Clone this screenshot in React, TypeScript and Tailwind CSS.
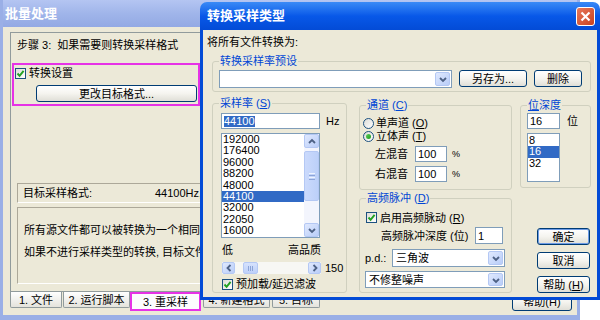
import React from "react";

function Check({ checked }: { checked?: boolean }) {
  return (
    <span className="w-[11px] h-[11px] shrink-0 border border-[#1c5180] bg-gradient-to-br from-[#dcdcd7] to-white flex items-center justify-center">
      {checked && (
        <svg width="9" height="9" viewBox="0 0 9 9">
          <path d="M1.5 4.5 L3.6 6.8 L7.6 1.8" stroke="#21a121" strokeWidth="1.9" fill="none" />
        </svg>
      )}
    </span>
  );
}

function Radio({ checked }: { checked?: boolean }) {
  return (
    <span className="w-[11px] h-[11px] shrink-0 rounded-full border border-[#1c5180] bg-gradient-to-br from-[#dcdcd7] to-white flex items-center justify-center">
      {checked && <span className="w-[5px] h-[5px] rounded-full bg-gradient-to-br from-[#5ad05a] to-[#1a9a1a]" />}
    </span>
  );
}

const arrowPaths: Record<string, string> = {
  up: "M2 7 L5 4 L8 7",
  down: "M2 4 L5 7 L8 4",
  left: "M6.5 2 L3.5 5 L6.5 8",
  right: "M3.5 2 L6.5 5 L3.5 8",
};

function SBtn({ dir, className }: { dir: string; className: string }) {
  return (
    <div className={"shrink-0 flex items-center justify-center rounded-[2px] border border-[#b4c8f4] bg-gradient-to-br from-[#e0e9fe] to-[#b9cdf8] " + className}>
      <svg width="10" height="10" viewBox="0 0 10 10">
        <path d={arrowPaths[dir]} stroke="#4d6185" strokeWidth="1.8" fill="none" />
      </svg>
    </div>
  );
}

function Btn({ children, className, def }: { children: React.ReactNode; className: string; def?: boolean }) {
  return (
    <div
      className={
        "shrink-0 flex items-center justify-center border border-[#003c74] rounded-[3px] bg-gradient-to-b from-white via-[#f5f4ef] to-[#e0dfd7] " +
        (def ? "shadow-[inset_0_0_0_1px_#6d9be6] " : "") +
        className
      }
    >
      {children}
    </div>
  );
}

function Group({ title, className, children }: { title: React.ReactNode; className: string; children?: React.ReactNode }) {
  return (
    <div className={"relative shrink-0 border border-[#d0d0bf] rounded-[3px] " + className}>
      <span className="absolute -top-[7px] left-[6px] bg-[#ece9d8] px-[1px] text-[#0046d5] leading-[12px] whitespace-nowrap">
        {title}
      </span>
      {children}
    </div>
  );
}

function Select({ text, className }: { text?: string; className: string }) {
  return (
    <div className={"shrink-0 flex border border-[#7f9db9] bg-white " + className}>
      <div className="flex-1 flex items-center pl-[3px] whitespace-nowrap">{text}</div>
      <SBtn dir="down" className="w-[15px] m-[1px]" />
    </div>
  );
}

const rates = ["192000", "176400", "96000", "88200", "48000", "44100", "32000", "22050", "16000"];

export default function App() {
  return (
    <div className="relative w-[600px] h-[320px] overflow-hidden bg-white text-[11px] leading-[12px] text-black font-['Liberation_Sans','Noto_Sans_CJK_SC',sans-serif]">
      {/* Background window */}
      <div className="absolute left-0 top-0 w-[580px] h-[320px] flex flex-col bg-[#ece9d8] border-l-[3px] border-r-[3px] border-b-[5px] border-[#9aafe6]">
        <div className="h-[27px] shrink-0 flex items-center pl-[2px] bg-gradient-to-b from-[#b4c5f2] via-[#a0b5ea] to-[#93a9e4] text-white font-bold text-[13px]">
          批量处理
        </div>
        <div className="flex-1 flex flex-col pl-[7px] pt-[5px]">
          <div className="w-[562px] h-[260px] shrink-0 flex flex-col border border-[#919b9c]">
            <div className="mt-[6px] ml-[6px] whitespace-pre">步骤 3:  如果需要则转换采样格式</div>
            <div className="mt-[12px] ml-[1px] w-[188px] h-[43px] border-2 border-[#e632e6] flex flex-col">
              <div className="mt-[2px] ml-[1px] flex items-center gap-[3px] h-[12px]">
                <Check checked />
                <span>转换设置</span>
              </div>
              <Btn className="mt-[6px] ml-[22px] w-[161px] h-[17px]">更改目标格式...</Btn>
            </div>
            <div className="mt-[77px] ml-[6px] w-[540px] h-[20px] flex items-center border-t border-l border-[#aca899] border-b-white border-r-white border-b border-r pl-[5px] whitespace-nowrap">
              <span className="w-[132px]">目标采样格式:</span>
              <span>44100Hz, 16 位, 立体声</span>
            </div>
            <div className="mt-[4px] ml-[6px] w-[540px] h-[77px] flex flex-col border-t border-l border-[#aca899] border-b-white border-r-white border-b border-r pl-[6px] pt-[16px] gap-[10px] whitespace-nowrap">
              <span>所有源文件都可以被转换为一个相同的采样类型。</span>
              <span>如果不进行采样类型的转换, 目标文件将保持原来的采样类型。</span>
            </div>
          </div>
          <div className="flex items-start h-[19px]">
            <div className="w-[52px] h-[16px] flex items-center justify-center border border-t-0 border-[#919b9c] rounded-b-[2px] bg-gradient-to-t from-[#e4e3dc] to-white whitespace-pre">1. 文件</div>
            <div className="ml-[1px] w-[67px] h-[16px] flex items-center justify-center border border-t-0 border-[#919b9c] rounded-b-[2px] bg-gradient-to-t from-[#e4e3dc] to-white whitespace-pre">2. 运行脚本</div>
            <div className="w-[71px] h-[19px] flex items-center justify-center border-2 border-[#e632e6] bg-[#fcfcfe] whitespace-pre">3. 重采样</div>
            <div className="ml-[2px] w-[67px] h-[16px] flex items-center justify-center border border-t-0 border-[#919b9c] rounded-b-[2px] bg-gradient-to-t from-[#e4e3dc] to-white whitespace-pre">4. 新建格式</div>
            <div className="ml-[2px] w-[48px] h-[16px] flex items-center justify-center border border-t-0 border-[#919b9c] rounded-b-[2px] bg-gradient-to-t from-[#e4e3dc] to-white whitespace-pre">5. 目标</div>
            <Btn className="ml-[192px] mt-[1px] w-[60px] h-[18px]">帮助(H)</Btn>
          </div>
        </div>
      </div>

      {/* Foreground dialog */}
      <div className="absolute left-[200px] top-[2px] w-[400px] h-[298px] flex flex-col">
        <div className="h-[28px] shrink-0 flex items-center justify-between pl-[7px] pr-[5px] rounded-t-[7px] bg-gradient-to-b from-[#3a8af6] via-[#0858e8] to-[#034bd6] text-white font-bold text-[13px]">
          <span>转换采样类型</span>
          <div className="w-[19px] h-[19px] rounded-[3px] border border-white bg-gradient-to-br from-[#e8785a] to-[#c9401c] flex items-center justify-center">
            <svg width="11" height="11" viewBox="0 0 11 11">
              <path d="M1.5 1.5 L9.5 9.5 M9.5 1.5 L1.5 9.5" stroke="white" strokeWidth="2.2" />
            </svg>
          </div>
        </div>
        <div className="flex-1 flex flex-col bg-[#ece9d8] border-x-[3px] border-b-[3px] border-[#034bd6] pl-[4px] pr-[6px]">
          <div className="mt-[6px] h-[12px]">将所有文件转换为:</div>
          {/* preset group */}
          <Group title="转换采样率预设" className="ml-[5px] mt-[13px] h-[31px]">
            <div className="flex items-center h-full pl-[6px] pt-[4px]">
              <Select className="w-[233px] h-[18px]" />
              <Btn className="ml-[7px] w-[68px] h-[17px]">另存为...</Btn>
              <Btn className="ml-[7px] w-[48px] h-[17px]">删除</Btn>
            </div>
          </Group>

          <div className="flex mt-[11px]">
            {/* sample rate */}
            <Group title={<>采样率 (<u>S</u>)</>} className="ml-[5px] w-[135px] h-[190px] flex flex-col">
              <div className="mt-[9px] ml-[8px] flex items-center">
                <div className="w-[99px] h-[16px] border border-[#7f9db9] bg-white flex items-center pl-[2px]">
                  <span className="bg-[#316ac5] text-white leading-[11px]">44100</span>
                </div>
                <span className="ml-[6px]">Hz</span>
              </div>
              <div className="mt-[4px] ml-[8px] w-[99px] h-[105px] border border-[#7f9db9] bg-white flex overflow-hidden">
                <div className="flex-1 flex flex-col overflow-hidden">
                  {rates.map((r) => (
                    <div
                      key={r}
                      className={
                        "h-[11.4px] leading-[11.4px] shrink-0 pl-[1px] " + (r === "44100" ? "bg-[#316ac5] text-white" : "")
                      }
                    >
                      {r}
                    </div>
                  ))}
                </div>
                <div className="w-[15px] flex flex-col bg-[#f3f5fd]">
                  <SBtn dir="up" className="h-[14px]" />
                  <div className="mt-[3px] h-[50px] rounded-[2px] border border-[#b4c8f4] bg-gradient-to-r from-[#cbdafc] to-[#bcd0f9] flex flex-col items-center justify-center gap-[1px]">
                    <span className="w-[6px] h-[1px] bg-[#eef3fe]" />
                    <span className="w-[6px] h-[1px] bg-[#8ca4d8]" />
                    <span className="w-[6px] h-[1px] bg-[#eef3fe]" />
                    <span className="w-[6px] h-[1px] bg-[#8ca4d8]" />
                  </div>
                  <div className="flex-1" />
                  <SBtn dir="down" className="h-[14px]" />
                </div>
              </div>
              <div className="mt-[7px] ml-[9px] w-[99px] flex justify-between h-[11px] leading-[11px]">
                <span>低</span>
                <span>高品质</span>
              </div>
              <div className="mt-[6px] ml-[9px] flex items-center h-[12px]">
                <div className="w-[99px] h-[12px] flex bg-[#f7f7f4]">
                  <SBtn dir="left" className="w-[13px] h-[12px]" />
                  <div className="ml-[8px] w-[15px] h-[12px] rounded-[2px] border border-[#b4c8f4] bg-gradient-to-b from-[#d6e2fd] to-[#bdd0f9] flex items-center justify-center gap-[1px]">
                    <span className="w-[1px] h-[5px] bg-[#8ca4d8]" />
                    <span className="w-[1px] h-[5px] bg-[#8ca4d8]" />
                    <span className="w-[1px] h-[5px] bg-[#8ca4d8]" />
                  </div>
                  <div className="flex-1" />
                  <SBtn dir="right" className="w-[13px] h-[12px]" />
                </div>
                <span className="ml-[4px]">150</span>
              </div>
              <div className="mt-[4px] ml-[9px] flex items-center gap-[3px] h-[12px]">
                <Check checked />
                <span>预加载/延迟滤波</span>
              </div>
            </Group>

            {/* middle column */}
            <div className="ml-[12px] w-[153px] flex flex-col">
              <Group title={<>通道 (<u>C</u>)</>} className="mt-[2px] h-[85px] flex flex-col">
                <div className="mt-[11px] ml-[3px] flex items-center gap-[2px] h-[12px]">
                  <Radio />
                  <span>单声道 (<u>O</u>)</span>
                </div>
                <div className="mt-[1px] ml-[3px] flex items-center gap-[2px] h-[12px]">
                  <Radio checked />
                  <span>立体声 (<u>T</u>)</span>
                </div>
                <div className="mt-[4px] ml-[15px] flex items-center h-[16px]">
                  <span className="w-[40px]">左混音</span>
                  <div className="w-[32px] h-[16px] border border-[#7f9db9] bg-white flex items-center pl-[2px]">100</div>
                  <span className="ml-[5px] text-[9px]">%</span>
                </div>
                <div className="mt-[4px] ml-[15px] flex items-center h-[16px]">
                  <span className="w-[40px]">右混音</span>
                  <div className="w-[32px] h-[16px] border border-[#7f9db9] bg-white flex items-center pl-[2px]">100</div>
                  <span className="ml-[5px] text-[9px]">%</span>
                </div>
              </Group>
              <Group title={<>高频脉冲 (<u>D</u>)</>} className="mt-[8px] h-[95px] flex flex-col">
                <div className="mt-[13px] ml-[6px] flex items-center gap-[3px] h-[11px]">
                  <Check checked />
                  <span>启用高频脉动 (<u>R</u>)</span>
                </div>
                <div className="mt-[4px] pl-[21px] pr-[8px] flex items-center h-[17px]">
                  <span>高频脉冲深度 (位)</span>
                  <div className="ml-auto w-[28px] h-[17px] border border-[#7f9db9] bg-white flex items-center pl-[2px]">1</div>
                </div>
                <div className="mt-[5px] pl-[5px] pr-[6px] flex items-center h-[18px]">
                  <span>p.d.:</span>
                  <Select text="三角波" className="ml-auto w-[113px] h-[18px]" />
                </div>
                <div className="mt-[4px] pl-[5px] flex items-center h-[17px]">
                  <Select text="不修整噪声" className="w-[140px] h-[17px]" />
                </div>
              </Group>
            </div>

            {/* right column */}
            <div className="ml-[8px] w-[71px] flex flex-col">
              <Group title={<><u>位</u>深度</>} className="mt-[2px] h-[83px] flex flex-col">
                <div className="mt-[7px] ml-[6px] flex items-center h-[16px]">
                  <div className="w-[33px] h-[16px] border border-[#7f9db9] bg-white flex items-center pl-[2px]">16</div>
                  <span className="ml-[7px]">位</span>
                </div>
                <div className="mt-[4px] ml-[6px] w-[33px] h-[49px] border border-[#7f9db9] bg-white flex flex-col pt-[0.5px]">
                  <div className="h-[11.5px] leading-[11.5px] pl-[1px]">8</div>
                  <div className="h-[11.5px] leading-[11.5px] pl-[1px] bg-[#316ac5] text-white">16</div>
                  <div className="h-[11.5px] leading-[11.5px] pl-[1px]">32</div>
                </div>
              </Group>
              <div className="mt-[40px] ml-[17px] flex flex-col gap-[7px]">
                <Btn def className="w-[53px] h-[17px]">确定</Btn>
                <Btn className="w-[53px] h-[17px]">取消</Btn>
                <Btn className="w-[53px] h-[17px]">帮助 (<u>H</u>)</Btn>
              </div>
            </div>
          </div>
        </div>
      </div>
    </div>
  );
}
